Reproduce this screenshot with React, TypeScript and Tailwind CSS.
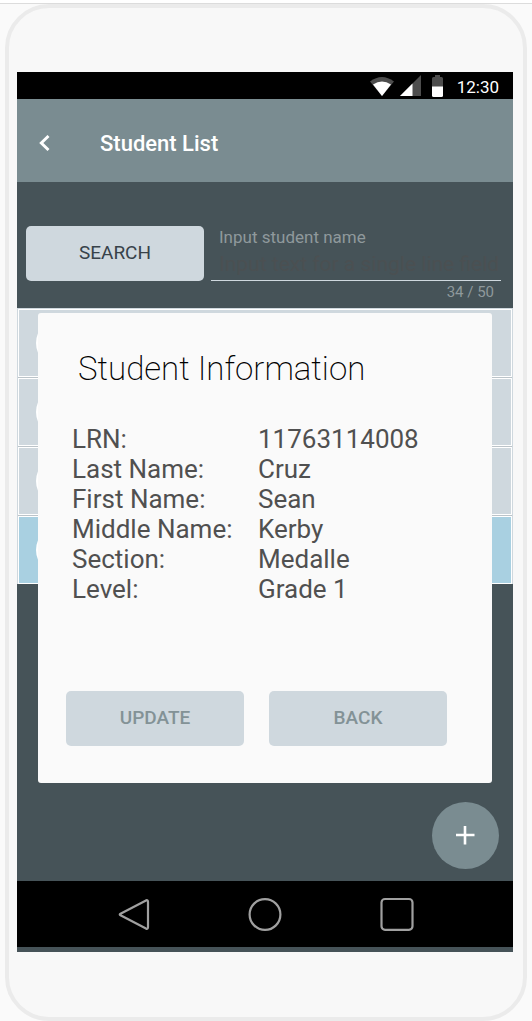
import React from "react";

const students = [
  { id: 1, selected: false },
  { id: 2, selected: false },
  { id: 3, selected: false },
  { id: 4, selected: true },
];

const details = [
  ["LRN:", "11763114008"],
  ["Last Name:", "Cruz"],
  ["First Name:", "Sean"],
  ["Middle Name:", "Kerby"],
  ["Section:", "Medalle"],
  ["Level:", "Grade 1"],
];

function StatusBar() {
  return (
    <div className="flex h-[27px] items-center justify-end bg-black pr-[14px] text-white">
      <svg width="24" height="20" viewBox="0 0 24 20" aria-hidden="true">
        <path d="M0 5.5Q12 -3.500 24 5.500L12 20Z" fill="#4d4d4d" />
        <path d="M3 8.500Q12 2.500 21 8.500L12 20Z" fill="#fff" />
      </svg>
      <svg className="ml-[6px]" width="21" height="21" viewBox="0 0 21 21" aria-hidden="true">
        <path d="M21 0V21H0Z" fill="#4d4d4d" />
        <path d="M12.500 8.500V21H0Z" fill="#fff" />
      </svg>
      <svg className="ml-[11px]" width="11" height="22" viewBox="0 0 11 22" aria-hidden="true">
        <path d="M3 0h5v2h1.500Q11 2 11 3.500V12H0V3.500Q0 2 1.500 2H3Z" fill="#4d4d4d" />
        <path d="M0 11.500h11v9Q11 22 9.500 22h-8Q0 22 0 20.500Z" fill="#fff" />
      </svg>
      <time className="ml-[14px] mt-[3px] text-[17px] leading-5">12:30</time>
    </div>
  );
}

function AppBar() {
  return (
    <header className="flex h-[83px] items-center bg-[#7a8c91] pl-[22px] pt-1 text-white">
      <button type="button" aria-label="Go back" className="flex h-8 w-[61px] items-center">
        <svg width="11" height="16" viewBox="0 0 11 16" fill="none" stroke="#fff" strokeWidth="2.900" aria-hidden="true">
          <path d="M9.500 1L2.300 8L9.500 15" />
        </svg>
      </button>
      <h1 className="mt-[2px] text-[22px] font-medium leading-7">Student List</h1>
    </header>
  );
}

function SearchBar() {
  return (
    <form className="flex h-[126px] gap-[7px] pl-[9px] pr-[12px] pt-[44px]">
      <button
        type="button"
        className="h-[55px] w-[178px] shrink-0 rounded-[5px] bg-[#cfd8de] text-[19px] text-[#37424a]"
      >
        SEARCH
      </button>
      <div className="flex min-w-0 flex-1 flex-col">
        <label htmlFor="student" className="pl-2 pt-px text-[17px] leading-5 text-[#8f999c]">
          Input student name
        </label>
        <input
          id="student"
          type="text"
          maxLength={50}
          defaultValue="Input text for a single line field"
          className="h-[34px] w-full border-b border-[#cfd8de] bg-transparent pl-2 text-[21px] text-[#4b5052] outline-none"
        />
        <span className="pr-[7px] pt-px text-right text-[15px] leading-5 text-[#8f999c]">34 / 50</span>
      </div>
    </form>
  );
}

function StudentRows() {
  return (
    <ul className="flex flex-col gap-px border-x border-t border-[#cfd8de] bg-[#bcc4c9]">
      {students.map((s) => (
        <li
          key={s.id}
          className={
            s.selected
              ? "flex h-[68px] items-center border border-white bg-[#a9d0e1] pl-[17px]"
              : "flex h-[68px] items-center border border-white bg-[#cfd8de] pl-[17px]"
          }
        >
          <span className="size-12 rounded-full bg-white" />
        </li>
      ))}
    </ul>
  );
}

function StudentDialog() {
  return (
    <section
      role="dialog"
      aria-labelledby="dialog-title"
      className="absolute inset-x-[21px] top-[131px] flex h-[470px] flex-col rounded-[3px] bg-[#fafafa]"
    >
      <h2 id="dialog-title" className="pl-[40px] pt-[36px] text-[33px] font-extralight leading-[40px] text-black">
        Student Information
      </h2>
      <dl className="grid grid-cols-[186px_1fr] pl-[34px] pt-[35px] text-[26px] leading-[30px] text-[#505050]">
        {details.map(([label, value]) => (
          <React.Fragment key={label}>
            <dt>{label}</dt>
            <dd>{value}</dd>
          </React.Fragment>
        ))}
      </dl>
      <div className="mt-auto flex gap-[25px] pb-[37px] pl-[28px] pr-[45px]">
        <button type="button" className="h-[55px] flex-1 rounded-[5px] bg-[#cfd8de] text-[19px] font-medium text-[#839296]">
          UPDATE
        </button>
        <button type="button" className="h-[55px] flex-1 rounded-[5px] bg-[#cfd8de] text-[19px] font-medium text-[#839296]">
          BACK
        </button>
      </div>
    </section>
  );
}

function NavBar() {
  return (
    <nav className="flex h-[66px] items-center justify-center gap-[98px] bg-black">
      <button type="button" aria-label="Back">
        <svg className="block" width="34" height="34" viewBox="0 0 34 34" fill="none" stroke="#a0a0a0" strokeWidth="2.200" strokeLinejoin="round" aria-hidden="true">
          <path d="M4.500 16.700Q3 17.500 4.500 18.300L30 31.600Q32 32.300 32 30.300V4.700Q32 2.700 30 3.400Z" />
        </svg>
      </button>
      <button type="button" aria-label="Home">
        <svg className="block" width="34" height="34" viewBox="0 0 34 34" fill="none" stroke="#a0a0a0" strokeWidth="2.200" aria-hidden="true">
          <circle cx="17" cy="17.500" r="15.400" />
        </svg>
      </button>
      <button type="button" aria-label="Recent apps">
        <svg className="block" width="34" height="34" viewBox="0 0 34 34" fill="none" stroke="#a0a0a0" strokeWidth="2.200" aria-hidden="true">
          <rect x="1.500" y="2" width="31" height="30.800" rx="3.500" />
        </svg>
      </button>
    </nav>
  );
}

export default function App() {
  return (
    <div className="min-h-screen bg-white pt-[3px] font-['Roboto',sans-serif]">
      <div className="border-t border-[#dcdcdc] bg-[#fafafa] pl-[5px] pr-[5px]">
        <div className="rounded-[44px] border-4 border-[#ebebeb] bg-[#f8f8f8] pb-[65px] pl-[8px] pr-[10px] pt-[64px]">
          <div className="bg-[#465358] pb-[5px]">
            <StatusBar />
            <AppBar />
            <main className="relative h-[699px]">
              <SearchBar />
              <StudentRows />
              <StudentDialog />
              <button
                type="button"
                aria-label="Add student"
                className="absolute bottom-[12px] right-[14px] flex size-[67px] items-center justify-center rounded-full bg-[#7a8c91]"
              >
                <svg width="20" height="20" viewBox="0 0 20 20" stroke="#fff" strokeWidth="2.600" aria-hidden="true">
                  <path d="M9 0V18.500M0 9H18.500" />
                </svg>
              </button>
            </main>
            <NavBar />
          </div>
        </div>
      </div>
    </div>
  );
}
